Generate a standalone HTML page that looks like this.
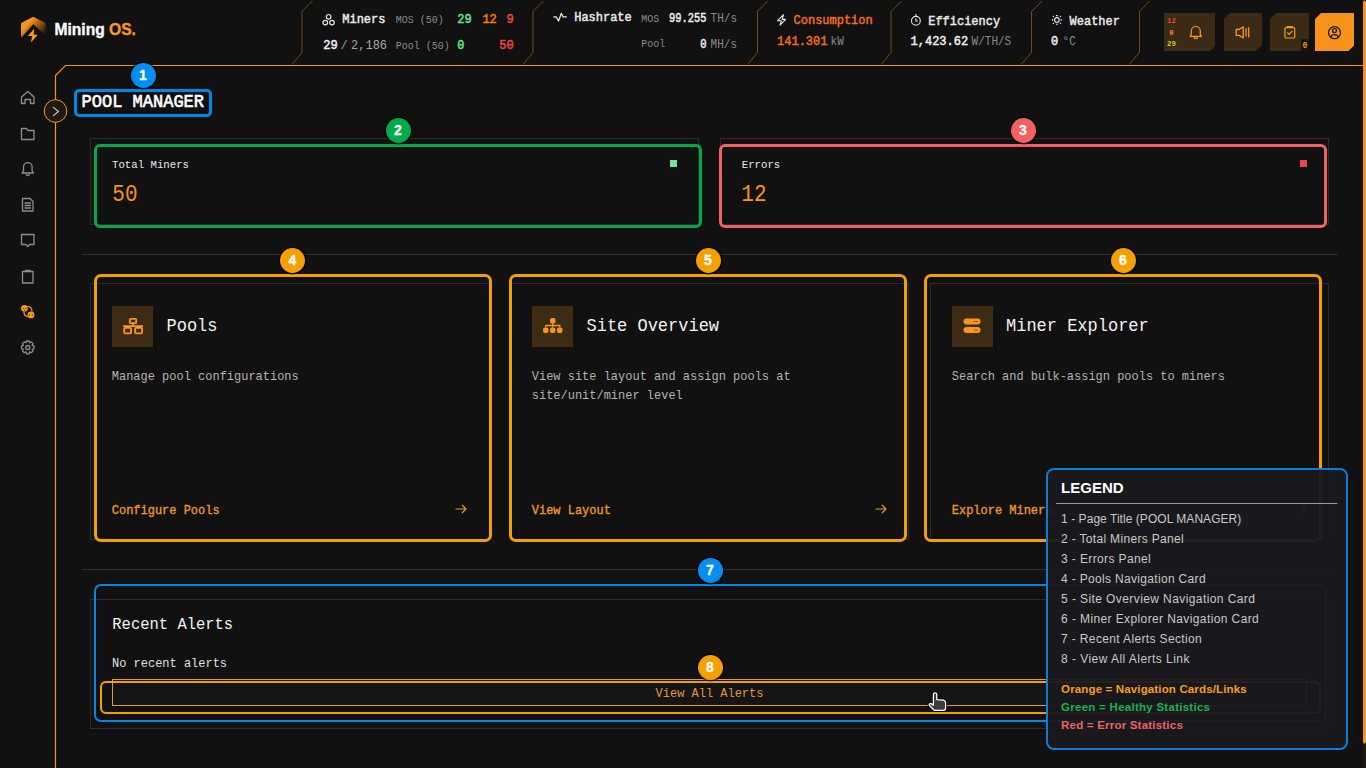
<!DOCTYPE html>
<html lang="en">
<head>
<meta charset="utf-8">
<title>Mining OS - Pool Manager</title>
<style>
*{margin:0;padding:0;box-sizing:border-box}
html,body{width:1366px;height:768px;overflow:hidden;background:#111111}
body{position:relative;font-family:"Liberation Mono",monospace;color:#e6e6e6}
.a{position:absolute}
svg{position:absolute;left:0;top:0;overflow:visible}
.mono{font-family:"Liberation Mono",monospace}
text.mono,g.mono text{transform-box:fill-box;transform-origin:0 73.5%;transform:scaleY(1.08)}
.sans{font-family:"Liberation Sans",sans-serif}
.panel{position:absolute;border:1px solid #2b2b2b;background:#111111}
.ob{position:absolute;border-style:solid;background:transparent}
.badge{position:absolute;width:25px;height:25px;border-radius:50%;color:#fff;font-family:"Liberation Sans",sans-serif;font-weight:bold;font-size:14px;line-height:25px;text-align:center;-webkit-text-stroke:0.3px #fff;box-shadow:0 0 0 1.5px rgba(0,0,0,.55)}
.iconbox{position:absolute;width:41px;height:41px;background:#3d2b13}
.legend{position:absolute;left:1046px;top:468px;width:302px;height:281.5px;border:2px solid #0a7dd6;border-radius:8px;background:rgba(26,26,30,0.955);font-family:"Liberation Sans",sans-serif}
</style>
</head>
<body>

<!-- ===== Frame lines & header separators ===== -->
<svg width="1366" height="768">
  <g stroke="#6e4c1e" stroke-width="1" fill="none">
    <path d="M312.5 1 L302 11.5 V52.5 L292.5 64"/>
    <path d="M543.5 1 L533 11.5 V52.5 L523.5 64"/>
    <path d="M767.5 1 L757.5 11.5 V52.5 L748 64"/>
    <path d="M901.5 1 L891 11.5 V52.5 L881.5 64"/>
    <path d="M1042 1 L1031.5 11.5 V52.5 L1021.5 64"/>
    <path d="M1149.5 1 L1139.5 11.5 V52.5 L1129.5 64"/>
  </g>
  <path d="M1363 65.5 H65.5 L55.5 75.5 V768" stroke="#f7931a" stroke-width="1.2" fill="none"/>
  <rect x="1363" y="0" width="3" height="768" fill="#1e1912"/>
  <rect x="1363" y="0.5" width="3" height="743" rx="1.5" fill="#f7931a"/>
</svg>

<!-- ===== Logo ===== -->
<svg width="1366" height="70">
  <defs>
    <linearGradient id="lg" x1="0.1" y1="0.2" x2="0.95" y2="0.85">
      <stop offset="0.2" stop-color="#f7981d"/>
      <stop offset="0.55" stop-color="#9a5a14"/>
      <stop offset="0.95" stop-color="#2a1806"/>
    </linearGradient>
  </defs>
  <path d="M21 24 Q21 23 22 22.4 L31.8 17.4 Q33.3 16.7 34.8 17.4 L44.7 22.6 Q45.7 23.2 45.7 24.3 V35.8 L33.3 24.2 L22.3 36.6 Q21 37.2 21 36 Z" fill="url(#lg)"/>
  <path d="M34.2 28.8 L27.8 35.9 H32.2 L30.9 42.4 L37.9 34.8 H33.7 Z" fill="#f7981d"/>
  <text x="54.5" y="35.3" class="sans" font-weight="bold" font-size="15.6" fill="#ffffff" stroke="#ffffff" stroke-width="0.35">Mining <tspan fill="#f7981d" stroke="#f7981d">OS.</tspan></text>
</svg>

<!-- ===== Header stats ===== -->
<svg width="1366" height="70">
  <!-- Miners -->
  <g fill="none" stroke="#e6e6e6" stroke-width="1.2">
    <circle cx="328.6" cy="16.8" r="2.3"/>
    <circle cx="325.3" cy="22.6" r="2.3"/>
    <circle cx="332" cy="22.6" r="2.3"/>
  </g>
  <text x="342.3" y="22.8" font-size="12" stroke="#e8e8e8" stroke-width="0.45" fill="#e8e8e8" class="mono">Miners</text>
  <text x="395.7" y="22.8" font-size="10" fill="#8c8c8c" class="mono">MOS (50)</text>
  <text x="457.2" y="22.8" font-size="12" stroke="#5fe88a" stroke-width="0.45" fill="#5fe88a" class="mono">29</text>
  <text x="482.4" y="22.8" font-size="12" stroke="#ff7a00" stroke-width="0.45" fill="#ff7a00" class="mono">12</text>
  <text x="506.4" y="22.8" font-size="12" stroke="#ef4444" stroke-width="0.45" fill="#ef4444" class="mono">9</text>
  <text x="323.3" y="48.6" font-size="12" stroke="#f0f0f0" stroke-width="0.45" fill="#f0f0f0" class="mono">29</text>
  <text x="340.5" y="48.6" font-size="12" fill="#9a9a9a" class="mono">/</text>
  <text x="351.1" y="48.6" font-size="12" fill="#a8a8a8" class="mono">2,186</text>
  <text x="395.7" y="48.6" font-size="10" fill="#8c8c8c" class="mono">Pool (50)</text>
  <text x="457.2" y="48.6" font-size="12" stroke="#5fe88a" stroke-width="0.45" fill="#5fe88a" class="mono">0</text>
  <text x="499.3" y="48.6" font-size="12" stroke="#ef4444" stroke-width="0.45" fill="#ef4444" class="mono">50</text>

  <!-- Hashrate -->
  <path d="M553.3 16.9 H556.2 L558.5 21 L561.3 13.4 L563 16.8 H566.8" fill="none" stroke="#e6e6e6" stroke-width="1.3" stroke-linejoin="round"/>
  <text x="574.2" y="21" font-size="12" stroke="#e8e8e8" stroke-width="0.45" fill="#e8e8e8" class="mono">Hashrate</text>
  <text x="641.3" y="22" font-size="10" fill="#8c8c8c" class="mono">MOS</text>
  <text x="706.5" y="22" font-size="10.4" stroke="#f0f0f0" stroke-width="0.4" fill="#f0f0f0" class="mono" text-anchor="end" style="transform:scaleY(1.2)">99.255</text>
  <text x="710.6" y="22" font-size="11" fill="#8c8c8c" class="mono">TH/s</text>
  <text x="641.3" y="47.5" font-size="10" fill="#8c8c8c" class="mono">Pool</text>
  <text x="706.5" y="47.5" font-size="10.4" stroke="#f0f0f0" stroke-width="0.4" fill="#f0f0f0" class="mono" text-anchor="end" style="transform:scaleY(1.2)">0</text>
  <text x="710.6" y="47.5" font-size="11" fill="#8c8c8c" class="mono">MH/s</text>

  <!-- Consumption -->
  <path d="M783.4 14.7 L777.5 20.8 H781.3 L780 25.2 L785.6 19.4 H782.3 Z" fill="none" stroke="#e6e6e6" stroke-width="1.1" stroke-linejoin="round"/>
  <text x="793.6" y="24" font-size="12" stroke="#f26b1d" stroke-width="0.45" fill="#f26b1d" class="mono">Consumption</text>
  <text x="777.1" y="45" font-size="12" stroke="#f26b1d" stroke-width="0.45" fill="#f26b1d" class="mono">141.301</text>
  <text x="830.6" y="45" font-size="11" fill="#8c8c8c" class="mono">kW</text>

  <!-- Efficiency -->
  <g fill="none" stroke="#e6e6e6" stroke-width="1.1">
    <circle cx="915.9" cy="20.8" r="4.4"/>
    <path d="M915.9 14 V16.4 M915.9 18.3 V21 H917.8"/>
  </g>
  <text x="928.2" y="24.6" font-size="12" stroke="#e8e8e8" stroke-width="0.45" fill="#e8e8e8" class="mono">Efficiency</text>
  <text x="910.6" y="45" font-size="12" stroke="#f0f0f0" stroke-width="0.45" fill="#f0f0f0" class="mono">1,423.62</text>
  <text x="971.6" y="45" font-size="11" fill="#8c8c8c" class="mono">W/TH/S</text>

  <!-- Weather -->
  <g fill="none" stroke="#e6e6e6" stroke-width="1.1">
    <circle cx="1056.9" cy="19.9" r="2.3"/>
    <path d="M1056 15.6 H1057.8 M1056 24.3 H1057.8 M1052.6 19 V20.8 M1061.2 19 V20.8 M1052.9 15.9 L1053.9 16.9 M1060.9 15.9 L1059.9 16.9 M1052.9 23.9 L1053.9 22.9 M1060.9 23.9 L1059.9 22.9"/>
  </g>
  <text x="1069.6" y="24.6" font-size="12" stroke="#e8e8e8" stroke-width="0.45" fill="#e8e8e8" class="mono">Weather</text>
  <text x="1050.9" y="45" font-size="12" stroke="#f0f0f0" stroke-width="0.45" fill="#f0f0f0" class="mono">0</text>
  <text x="1062.6" y="45" font-size="11" fill="#8c8c8c" class="mono">°C</text>

  <!-- Action buttons -->
  <path d="M1164 13 H1215 V46 L1210 51 H1164 Z" fill="#3b2a14"/>
  <text x="1171.5" y="22.8" font-size="7.3" font-weight="bold" fill="#ef4444" class="mono" text-anchor="middle">12</text>
  <text x="1171.5" y="34.6" font-size="7.3" font-weight="bold" fill="#f7931a" class="mono" text-anchor="middle">0</text>
  <text x="1171.5" y="46.4" font-size="7.3" font-weight="bold" fill="#c8d41a" class="mono" text-anchor="middle">29</text>
  <g fill="none" stroke="#f7981d" stroke-width="1.2" stroke-linejoin="round">
    <path d="M1191.3 34.6 V31 A4.5 4.5 0 0 1 1200.3 31 V34.6 L1201.6 36.3 H1190 Z"/>
    <path d="M1194.4 36.5 V38.4 H1197.2 V36.5"/>
  </g>

  <path d="M1230 13 H1262 V45 L1256 51 H1224 V19 Z" fill="#3b2a14"/>
  <g fill="none" stroke="#f7981d" stroke-width="1.3" stroke-linejoin="round">
    <path d="M1236.2 29.5 H1239 L1243.2 26.9 V38 L1239 35.4 H1236.2 Z"/>
    <path d="M1246 28.3 V36.6 M1248.7 27.3 V37.6"/>
  </g>

  <path d="M1276 13 H1309 V51 H1270 V19 Z" fill="#3b2a14"/>
  <g fill="none" stroke="#f7981d" stroke-width="1.2" stroke-linejoin="round">
    <rect x="1284.9" y="27.6" width="9.8" height="10.4" rx="1"/>
    <path d="M1287.3 27.6 V26.6 H1292.3 V27.6"/>
    <path d="M1287.3 32.5 L1289.2 34.3 L1292.3 30.8"/>
  </g>
  <rect x="1301" y="39" width="8" height="12" fill="#161616"/>
  <text x="1305" y="48" font-size="8" font-weight="bold" fill="#f7931a" class="mono" text-anchor="middle">0</text>

  <path d="M1321 13 H1354 V45.5 L1348.5 51 H1315 V19 Z" fill="#f7931a"/>
  <g fill="none" stroke="#1a1a1a" stroke-width="1.3">
    <circle cx="1334.5" cy="32.7" r="6"/>
    <circle cx="1334.5" cy="30.6" r="2"/>
    <path d="M1330.6 37.2 A4 3.4 0 0 1 1338.4 37.2"/>
  </g>
</svg>

<!-- ===== Sidebar ===== -->
<svg width="60" height="768">
  <g fill="none" stroke="#8e8e8e" stroke-width="1.3" stroke-linejoin="round" stroke-linecap="round">
    <!-- home -->
    <path d="M21.5 97 L27.8 91.5 L34 97 V103.5 H30.5 V99.5 H25 V103.5 H21.5 Z"/>
    <!-- folder -->
    <path d="M21.5 128.5 H26.5 L28 130.5 H34 V139.5 H21.5 Z"/>
    <!-- bell -->
    <path d="M23.5 171 V167 A4.3 4.3 0 0 1 32.1 167 V171 L33.5 173 H22.1 Z M26.3 174.5 A1.6 1.6 0 0 0 29.3 174.5"/>
    <!-- doc -->
    <path d="M22.5 198.5 H30 L33 201.5 V211 H22.5 Z M25 203 H30.5 M25 205.5 H30.5 M25 208 H30.5"/>
    <!-- chat -->
    <path d="M21.5 234.5 H34 V244.5 H29.5 L27.8 246.5 L26 244.5 H21.5 Z"/>
    <!-- clipboard -->
    <path d="M22.5 271.5 H33 V283 H22.5 Z M25.5 271.5 V270.5 H30 V271.5"/>
    <!-- gear -->
    <circle cx="27.8" cy="347.5" r="2"/>
    <path d="M26.5 341 H29 L29.6 342.8 L31.3 341.9 L33 343.6 L32.1 345.3 L34 345.9 V348.6 L32.1 349.3 L33 351 L31.3 352.7 L29.6 351.8 L29 353.8 H26.5 L25.9 351.8 L24.2 352.7 L22.5 351 L23.4 349.3 L21.5 348.6 V345.9 L23.4 345.3 L22.5 343.6 L24.2 341.9 L25.9 342.8 Z"/>
  </g>
  <!-- pools (active) -->
  <g fill="#f7981d">
    <circle cx="24.4" cy="308.3" r="3.4"/>
    <circle cx="31" cy="314.9" r="3.4"/>
  </g>
  <g fill="#2a1a08">
    <circle cx="23.2" cy="308.3" r="0.55"/><circle cx="26.2" cy="308.3" r="0.55"/><circle cx="24.6" cy="310.3" r="0.55"/>
    <circle cx="29.6" cy="314.9" r="0.55"/><circle cx="32.4" cy="314.9" r="0.55"/>
  </g>
  <path d="M27.3 306.6 Q32 306.3 32 311.5 M23.9 311.6 Q23.9 316.5 28.3 316.6" fill="none" stroke="#f7981d" stroke-width="1.2"/>
  <!-- collapse button -->
  <circle cx="55.5" cy="111" r="11.3" fill="#1e1912" stroke="#f7931a" stroke-width="1"/>
  <path d="M53.4 107.4 L58.5 111.5 L53.4 115.6" fill="none" stroke="#d0d0d0" stroke-width="1.1" stroke-linecap="round"/>
</svg>

<!-- ===== Page title ===== -->
<div class="ob" style="left:74px;top:89px;width:138px;height:27.5px;border-width:3px;border-color:#0088e8;border-radius:5px"></div>
<svg width="1366" height="768">
  <text x="81.6" y="107" font-size="17" fill="#ffffff" stroke="#ffffff" stroke-width="0.6" class="mono" transform="translate(0,107) scale(1,1.1) translate(0,-107)">POOL MANAGER</text>
</svg>

<!-- ===== Stats panels ===== -->
<div class="panel" style="left:90px;top:138px;width:609px;height:87px"></div>
<div class="panel" style="left:720px;top:138px;width:609px;height:87px"></div>
<div class="a" style="left:670px;top:160px;width:7px;height:7px;background:#6ee79a"></div>
<div class="a" style="left:1300px;top:160px;width:7px;height:7px;background:#ef4444"></div>
<svg width="1366" height="768">
  <text x="112" y="167.8" font-size="10.7" fill="#e8e8e8" class="mono">Total Miners</text>
  <text x="112.3" y="201.2" font-size="21" fill="#f7931a" class="mono" style="transform:scaleY(1.18)">50</text>
  <text x="741.8" y="167.8" font-size="10.7" fill="#e8e8e8" class="mono">Errors</text>
  <text x="741.3" y="201.2" font-size="21" fill="#f7931a" class="mono" style="transform:scaleY(1.18)">12</text>
</svg>
<div class="ob" style="left:94px;top:143.5px;width:608px;height:84px;border-width:3px;border-color:#00aa48;border-radius:6px"></div>
<div class="ob" style="left:719px;top:143.5px;width:608px;height:84px;border-width:3px;border-color:#f36060;border-radius:6px"></div>

<div class="a" style="left:82px;top:254px;width:1256px;height:1px;background:#303030"></div>

<!-- ===== Nav cards ===== -->
<div class="panel" style="left:90px;top:283px;width:401px;height:257px"></div>
<div class="panel" style="left:510px;top:283px;width:399px;height:257px"></div>
<div class="panel" style="left:930px;top:283px;width:399px;height:257px"></div>

<div class="iconbox" style="left:112px;top:306px"></div>
<div class="iconbox" style="left:532px;top:306px"></div>
<div class="iconbox" style="left:952px;top:306px"></div>
<svg width="1366" height="768">
  <!-- pools icon -->
  <g fill="none" stroke="#f7981d" stroke-width="1.8" stroke-linejoin="round">
    <rect x="129.8" y="318.9" width="6.4" height="4.3" rx="0.8"/>
    <path d="M133 323.2 V326 M123.2 326.1 H143.1"/>
    <rect x="124.2" y="327.9" width="6.9" height="5.4" rx="0.8"/>
    <rect x="135.2" y="327.9" width="6.9" height="5.4" rx="0.8"/>
  </g>
  <!-- site overview icon -->
  <g fill="#f7981d">
    <rect x="550" y="318" width="5.5" height="5.5" rx="2"/>
    <rect x="543" y="327.5" width="5.5" height="5.5" rx="2"/>
    <rect x="550" y="327.5" width="5.5" height="5.5" rx="2"/>
    <rect x="557" y="327.5" width="5.5" height="5.5" rx="2"/>
  </g>
  <path d="M552.8 323 V327.5 M545.8 327.5 V325.5 H559.8 V327.5" fill="none" stroke="#f7981d" stroke-width="1.3"/>
  <!-- server icon -->
  <g fill="#f7981d">
    <rect x="963.5" y="318.5" width="17" height="6" rx="3"/>
    <rect x="963.5" y="327" width="17" height="6" rx="3"/>
  </g>
  <g fill="#3d2b13">
    <rect x="974" y="321" width="1.3" height="1"/><rect x="976.2" y="321" width="1.3" height="1"/>
    <rect x="974" y="329.5" width="1.3" height="1"/><rect x="976.2" y="329.5" width="1.3" height="1"/>
  </g>

  <text x="166.5" y="331.2" font-size="17" fill="#f2f2f2" class="mono" style="transform:scaleY(1.13)">Pools</text>
  <text x="586.5" y="331.2" font-size="17" fill="#f2f2f2" class="mono" style="transform:scaleY(1.13)">Site Overview</text>
  <text x="1006" y="331.2" font-size="17" fill="#f2f2f2" class="mono" style="transform:scaleY(1.13)">Miner Explorer</text>

  <g font-size="12" fill="#b3b3b3" class="mono">
    <text x="111.8" y="379.8">Manage pool configurations</text>
    <text x="531.8" y="379.8">View site layout and assign pools at</text>
    <text x="531.8" y="398.6">site/unit/miner level</text>
    <text x="951.8" y="379.8">Search and bulk-assign pools to miners</text>
  </g>
  <g font-size="12" fill="#e8962a" stroke="#e8962a" stroke-width="0.35" class="mono">
    <text x="111.8" y="514">Configure Pools</text>
    <text x="531.8" y="514">View Layout</text>
    <text x="951.8" y="514">Explore Miners</text>
  </g>
  <g fill="none" stroke="#e8962a" stroke-width="1.2">
    <path d="M455.5 509 H466 M462 505 L466 509 L462 513"/>
    <path d="M875.5 509 H886 M882 505 L886 509 L882 513"/>
    <path d="M1295.5 509 H1306 M1302 505 L1306 509 L1302 513"/>
  </g>
</svg>
<div class="ob" style="left:93.5px;top:273.5px;width:398.5px;height:268.5px;border-width:3px;border-color:#f3a000;border-radius:7px"></div>
<div class="ob" style="left:508.5px;top:273.5px;width:398.5px;height:268.5px;border-width:3px;border-color:#f3a000;border-radius:7px"></div>
<div class="ob" style="left:923.5px;top:273.5px;width:398.5px;height:268.5px;border-width:3px;border-color:#f3a000;border-radius:7px"></div>

<div class="a" style="left:82px;top:569px;width:1256px;height:1px;background:#303030"></div>

<!-- ===== Recent alerts ===== -->
<div class="panel" style="left:90px;top:599px;width:1239px;height:130px"></div>
<div class="a" style="left:112px;top:679px;width:1195px;height:27px;border:1px solid #e09a3a;background:#151515"></div>
<svg width="1366" height="768">
  <text x="112.3" y="629.2" font-size="15.5" fill="#f2f2f2" class="mono">Recent Alerts</text>
  <text x="112" y="667" font-size="12" fill="#e0e0e0" class="mono">No recent alerts</text>
  <text x="709.5" y="696.7" font-size="12" fill="#e0963a" class="mono" text-anchor="middle">View All Alerts</text>
</svg>
<div class="ob" style="left:94px;top:584px;width:1232.5px;height:137.5px;border-width:2px;border-color:#0088e8;border-radius:7px"></div>
<div class="ob" style="left:99.5px;top:681px;width:1221.5px;height:32.5px;border-width:2px;border-color:#f3a000;border-radius:6px"></div>

<!-- ===== Badges ===== -->
<div class="badge" style="left:130.5px;top:63px;background:#008ef0">1</div>
<div class="badge" style="left:385.5px;top:117.5px;background:#00aa48">2</div>
<div class="badge" style="left:1010.5px;top:117.5px;background:#f36060">3</div>
<div class="badge" style="left:280px;top:248px;background:#f3a000">4</div>
<div class="badge" style="left:695.5px;top:248px;background:#f3a000">5</div>
<div class="badge" style="left:1110.5px;top:248px;background:#f3a000">6</div>
<div class="badge" style="left:697.5px;top:558px;background:#008ef0">7</div>
<div class="badge" style="left:697.5px;top:655px;background:#f3a000">8</div>

<!-- ===== Cursor ===== -->
<svg width="1366" height="768">
  <path d="M933.4 705.2 V694.6 Q933.4 692.9 935.1 692.9 Q936.8 692.9 936.8 694.6 V699.6 L940.5 699.8 L943.5 700.2 Q945.6 700.8 945.6 702.8 V708.3 Q945.6 710.4 943.5 710.4 H934.3 L929.4 705.5 Q928.7 704.5 929.6 703.8 Q930.6 703.2 931.6 703.9 Z" fill="none" stroke="#000" stroke-width="3"/>
  <path d="M933.4 705.2 V694.6 Q933.4 692.9 935.1 692.9 Q936.8 692.9 936.8 694.6 V699.6 L940.5 699.8 L943.5 700.2 Q945.6 700.8 945.6 702.8 V708.3 Q945.6 710.4 943.5 710.4 H934.3 L929.4 705.5 Q928.7 704.5 929.6 703.8 Q930.6 703.2 931.6 703.9 Z" fill="#3c3c3c" stroke="#ffffff" stroke-width="1.3" stroke-linejoin="round"/>
</svg>

<!-- ===== Legend ===== -->
<div class="legend">
  <svg width="302" height="281" style="left:-2.5px;top:-3px"><g transform="translate(1.7,0)">
    <text x="13.4" y="26" font-size="15" font-weight="bold" fill="#ffffff" class="sans">LEGEND</text>
    <rect x="8.5" y="36" width="281" height="1" fill="#9a9a9a"/>
    <g font-size="12" fill="#c8c8c8" class="sans">
      <text x="13.4" textLength="180.2" lengthAdjust="spacing" y="55.5">1 - Page Title (POOL MANAGER)</text>
      <text x="13.4" textLength="122.6" lengthAdjust="spacing" y="75.5">2 - Total Miners Panel</text>
      <text x="13.4" textLength="89.7" lengthAdjust="spacing" y="95.5">3 - Errors Panel</text>
      <text x="13.4" textLength="144.5" lengthAdjust="spacing" y="115.5">4 - Pools Navigation Card</text>
      <text x="13.4" textLength="193.8" lengthAdjust="spacing" y="135.5">5 - Site Overview Navigation Card</text>
      <text x="13.4" textLength="197.7" lengthAdjust="spacing" y="155.5">6 - Miner Explorer Navigation Card</text>
      <text x="13.4" textLength="140.6" lengthAdjust="spacing" y="175.5">7 - Recent Alerts Section</text>
      <text x="13.4" textLength="128.3" lengthAdjust="spacing" y="195.5">8 - View All Alerts Link</text>
    </g>
    <g font-size="11.5" font-weight="bold" class="sans">
      <text x="13.4" textLength="185.6" lengthAdjust="spacing" y="225.5" fill="#f5a00f">Orange = Navigation Cards/Links</text>
      <text x="13.4" textLength="148.9" lengthAdjust="spacing" y="243.5" fill="#19b24f">Green = Healthy Statistics</text>
      <text x="13.4" textLength="121.7" lengthAdjust="spacing" y="261.5" fill="#f06262">Red = Error Statistics</text>
    </g>
  </g></svg>
</div>

</body>
</html>
